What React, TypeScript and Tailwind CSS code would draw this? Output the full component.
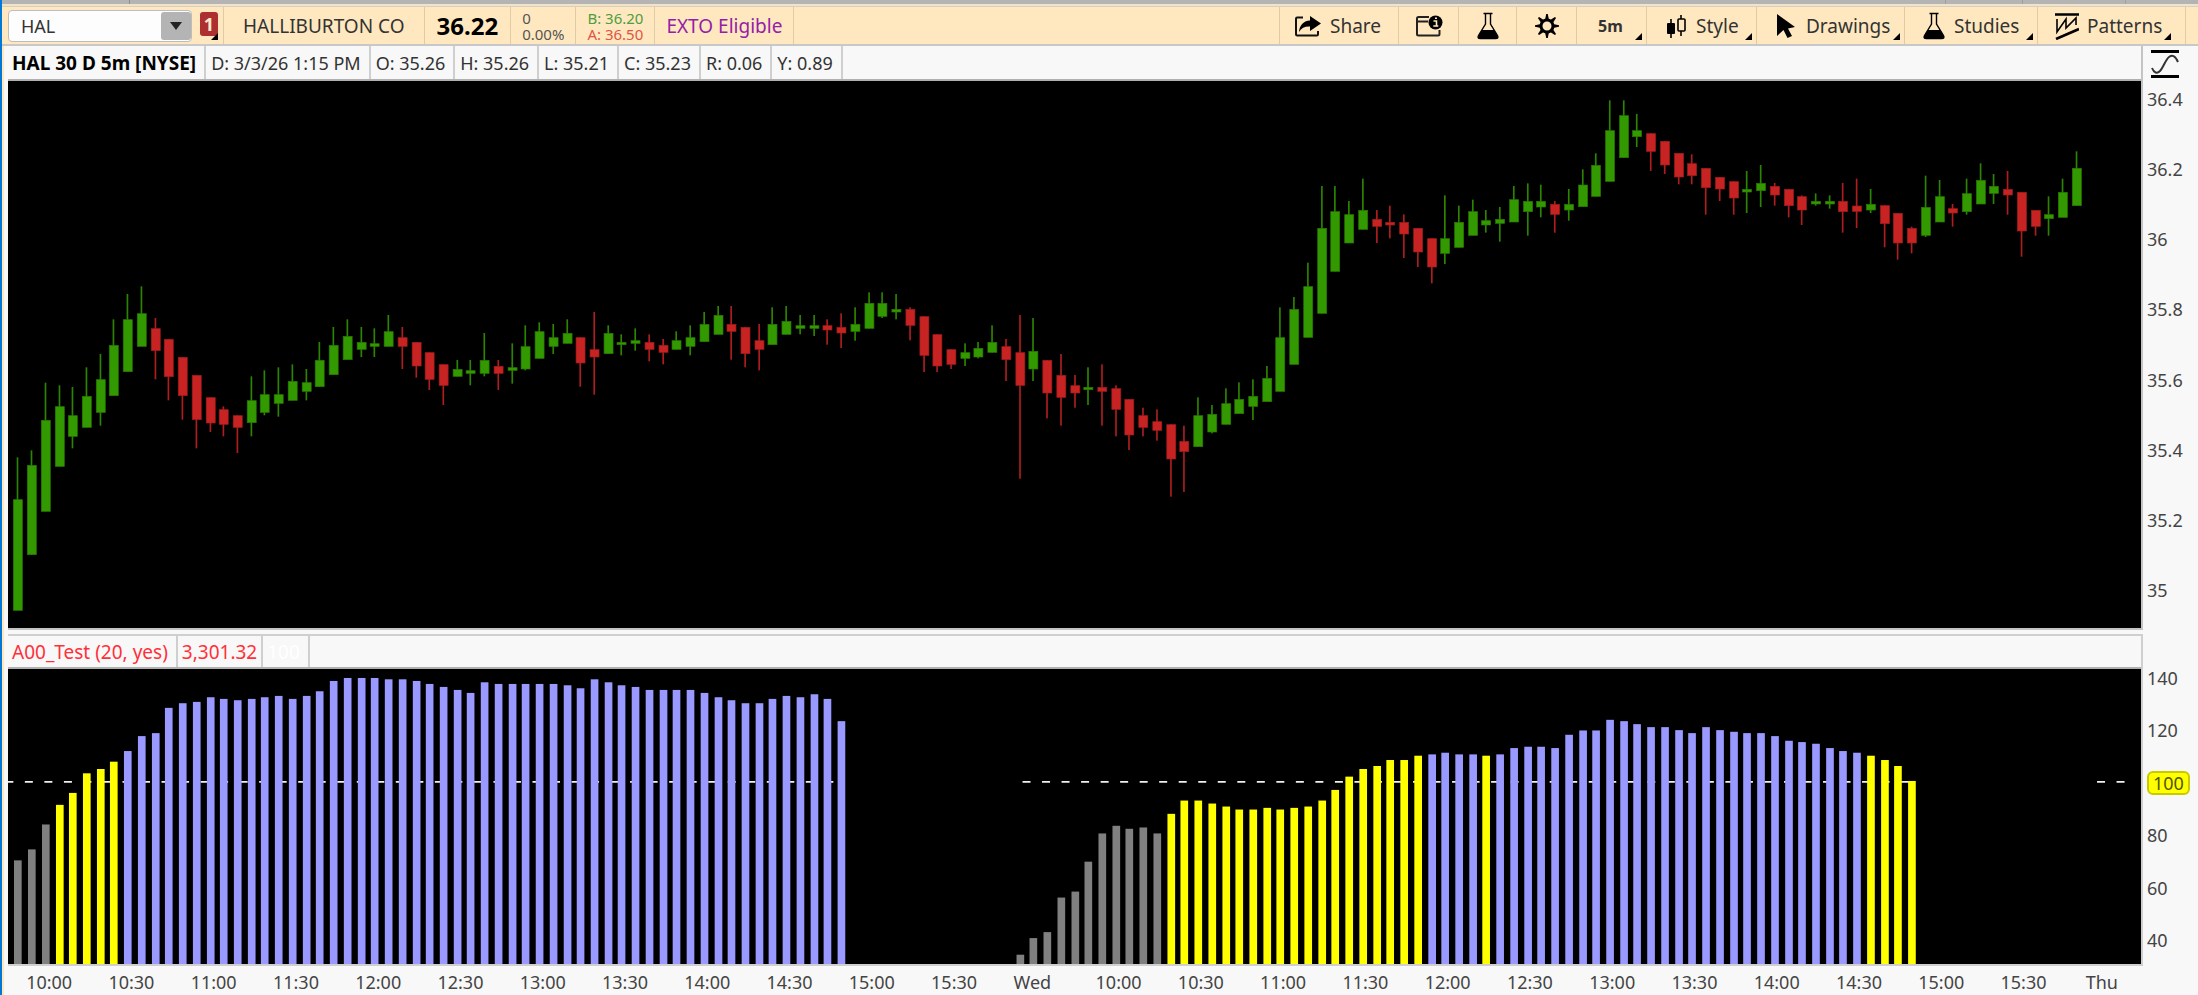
import type { ReactNode } from "react";
import clsx from "clsx";

type Candle = [dir: "g" | "r", high: number, top: number, bottom: number, low: number];

interface BarRun {
  start: number;
  color: string;
  tops: number[];
}

// plot units, three per pixel at full size
const PLOT_W = 6402;
const PRICE_H = 1641;
const STUDY_H = 888;
const PITCH = 41.19;
const FIRST = 31;

const CANDLES: Candle[] = [
  ["g", 1129, 1255, 1588, 1588], ["g", 1108, 1152, 1421, 1421], ["g", 905, 1017, 1291, 1291], ["g", 913, 976, 1156, 1156],
  ["g", 918, 1003, 1066, 1102], ["g", 859, 945, 1039, 1039], ["g", 819, 895, 994, 1034], ["g", 715, 792, 944, 944],
  ["g", 639, 715, 872, 872], ["g", 616, 697, 796, 796], ["r", 711, 742, 809, 895], ["r", 774, 774, 887, 958],
  ["r", 828, 828, 944, 1016], ["r", 882, 882, 1016, 1102], ["r", 949, 949, 1026, 1053], ["r", 976, 985, 1030, 1066],
  ["r", 1003, 1003, 1039, 1116], ["g", 886, 958, 1025, 1066], ["g", 868, 940, 994, 1003], ["g", 859, 940, 967, 1007],
  ["g", 850, 900, 958, 958], ["g", 864, 904, 931, 958], ["g", 783, 837, 917, 917], ["g", 738, 792, 881, 881],
  ["g", 715, 765, 836, 836], ["g", 738, 783, 805, 828], ["g", 742, 787, 796, 828], ["g", 702, 751, 796, 796],
  ["r", 738, 769, 796, 864], ["r", 783, 783, 855, 890], ["r", 814, 814, 895, 927], ["r", 850, 850, 913, 972],
  ["g", 837, 864, 886, 886], ["g", 837, 868, 877, 913], ["g", 756, 837, 877, 886], ["r", 837, 855, 877, 927],
  ["g", 787, 859, 868, 908], ["g", 733, 796, 864, 868], ["g", 724, 751, 832, 832], ["g", 729, 769, 796, 819],
  ["g", 715, 756, 787, 787], ["r", 769, 769, 846, 917], ["r", 693, 805, 828, 941], ["g", 733, 756, 818, 818],
  ["g", 760, 783, 791, 823], ["g", 742, 778, 787, 809], ["r", 760, 783, 805, 841], ["r", 774, 792, 814, 850],
  ["g", 751, 778, 805, 805], ["g", 733, 769, 796, 823], ["g", 693, 729, 782, 782], ["g", 675, 702, 760, 760],
  ["r", 675, 729, 751, 836], ["r", 738, 738, 818, 859], ["r", 729, 778, 805, 868], ["g", 679, 729, 791, 791],
  ["g", 675, 720, 760, 760], ["g", 702, 733, 742, 760], ["g", 702, 733, 742, 765], ["r", 715, 733, 747, 791],
  ["r", 697, 738, 756, 801], ["g", 679, 729, 751, 779], ["g", 634, 666, 742, 742], ["g", 634, 666, 706, 711],
  ["g", 639, 684, 693, 715], ["r", 679, 684, 733, 778], ["r", 706, 706, 823, 873], ["r", 760, 760, 855, 873],
  ["r", 805, 805, 850, 864], ["g", 787, 814, 832, 855], ["g", 783, 801, 828, 832], ["g", 733, 783, 814, 814],
  ["r", 774, 796, 836, 900], ["r", 702, 814, 913, 1193], ["g", 711, 810, 864, 900], ["r", 837, 837, 936, 1012],
  ["r", 819, 882, 949, 1034], ["r", 882, 913, 936, 980], ["g", 859, 918, 926, 972], ["r", 850, 918, 931, 1034],
  ["r", 913, 922, 985, 1066], ["r", 954, 954, 1062, 1107], ["r", 980, 1003, 1039, 1066], ["r", 985, 1021, 1048, 1079],
  ["r", 1030, 1030, 1134, 1247], ["r", 1034, 1080, 1112, 1233], ["g", 949, 1003, 1097, 1097], ["g", 972, 999, 1053, 1057],
  ["g", 922, 967, 1030, 1030], ["g", 904, 954, 998, 998], ["g", 895, 945, 976, 1017], ["g", 855, 891, 962, 962],
  ["g", 679, 769, 931, 931], ["g", 648, 684, 850, 850], ["g", 545, 616, 769, 769], ["g", 315, 441, 697, 697],
  ["g", 315, 391, 571, 571], ["g", 360, 400, 486, 486], ["g", 293, 387, 445, 445], ["r", 387, 414, 436, 486],
  ["r", 374, 423, 432, 472], ["r", 400, 423, 459, 531], ["r", 441, 441, 513, 558], ["r", 472, 472, 558, 607],
  ["g", 343, 472, 517, 549], ["g", 374, 423, 499, 499], ["g", 356, 391, 463, 463], ["g", 387, 418, 432, 455],
  ["g", 378, 414, 427, 482], ["g", 315, 355, 423, 423], ["g", 307, 360, 392, 464], ["g", 311, 360, 378, 409],
  ["r", 360, 369, 400, 455], ["g", 324, 369, 387, 419], ["g", 265, 311, 377, 377], ["g", 217, 252, 346, 346],
  ["g", 58, 148, 301, 301], ["g", 58, 103, 230, 230], ["g", 99, 148, 167, 198], ["r", 157, 157, 211, 270],
  ["r", 180, 180, 252, 279], ["r", 216, 216, 288, 310], ["r", 220, 247, 284, 310], ["r", 261, 261, 320, 401],
  ["r", 288, 288, 324, 360], ["r", 301, 301, 351, 401], ["g", 270, 324, 333, 396], ["g", 252, 306, 329, 378],
  ["r", 306, 315, 342, 374], ["r", 324, 324, 374, 409], ["r", 343, 346, 387, 432], ["g", 337, 360, 369, 374],
  ["g", 343, 360, 369, 383], ["r", 306, 360, 392, 455], ["r", 293, 374, 391, 441], ["g", 324, 369, 387, 396],
  ["r", 373, 373, 428, 499], ["r", 396, 396, 486, 536], ["r", 437, 441, 486, 517], ["g", 284, 378, 463, 468],
  ["g", 297, 346, 423, 423], ["r", 369, 382, 396, 437], ["g", 293, 337, 392, 401], ["g", 247, 297, 369, 369],
  ["g", 279, 315, 337, 369], ["r", 270, 324, 342, 401], ["r", 333, 333, 450, 527], ["r", 387, 387, 436, 464],
  ["g", 346, 400, 413, 464], ["g", 293, 333, 409, 409], ["g", 211, 261, 374, 374],
];

const GRAY = "#808080";
const YELLOW = "#ffff00";
const BLUE = "#9999ff";

const RUNS: BarRun[] = [
  { start: 0, color: GRAY, tops: [576, 543, 468] },
  { start: 3, color: YELLOW, tops: [409, 373, 314, 301, 279] },
  {
    start: 8,
    color: BLUE,
    tops: [
      247, 202, 193, 117, 103, 99, 85, 90, 94, 90, 85, 81, 90, 81, 67, 36, 27, 27, 27, 31, 31, 36, 45, 54, 63, 72, 40,
      45, 45, 45, 45, 45, 49, 58, 31, 40, 49, 54, 63, 63, 63, 63, 72, 85, 94, 103, 103, 90, 81, 85, 76, 90, 157,
    ],
  },
  { start: 73, color: GRAY, tops: [860, 810, 792, 688, 670, 580, 495, 472, 481, 477, 495] },
  {
    start: 84,
    color: YELLOW,
    tops: [436, 396, 396, 405, 414, 423, 423, 418, 423, 418, 414, 396, 364, 324, 301, 292, 274, 274, 261],
  },
  { start: 103, color: BLUE, tops: [257, 252, 257, 257] },
  { start: 107, color: YELLOW, tops: [261] },
  {
    start: 108,
    color: BLUE,
    tops: [
      257, 238, 234, 234, 238, 198, 185, 185, 153, 157, 166, 175, 175, 184, 193, 175, 184, 189, 193, 193, 202, 216, 220,
      225, 238, 247, 252,
    ],
  },
  { start: 135, color: YELLOW, tops: [261, 274, 292, 337] },
];

const HOURS = ["10:00", "10:30", "11:00", "11:30", "12:00", "12:30", "13:00", "13:30", "14:00", "14:30", "15:00", "15:30"];
const TIMES = [...HOURS, "Wed", ...HOURS, "Thu"];
const PRICES = ["36.4", "36.2", "36", "35.8", "35.6", "35.4", "35.2", "35"];
const LEVELS = ["140", "120", "100", "80", "60", "40"];
const QUOTE = ["D: 3/3/26 1:15 PM", "O: 35.26", "H: 35.26", "L: 35.21", "C: 35.23", "R: 0.06", "Y: 0.89"];

const snap = (v: number) => Math.round(v / 3) * 3;
const centerX = (i: number) => FIRST + i * PITCH;

function PricePlot() {
  return (
    <svg className="block h-full w-full" viewBox={`0 0 ${PLOT_W} ${PRICE_H}`} preserveAspectRatio="none" role="img" aria-label="HAL price">
      {CANDLES.map(([dir, high, top, bottom, low], i) => {
        const left = snap(centerX(i) - 15);
        const up = dir === "g";
        return (
          <g key={i}>
            <rect x={left + 11} y={high} width={5} height={low - high} fill={up ? "#2c8400" : "#ad1e1e"} />
            <rect
              x={left + 1}
              y={top + 1}
              width={27}
              height={Math.max(bottom - top - 1, 6)}
              fill={up ? "#339900" : "#c82323"}
              stroke={up ? "#287800" : "#9e1b1b"}
              strokeWidth={2}
            />
          </g>
        );
      })}
    </svg>
  );
}

function StudyPlot() {
  return (
    <svg className="block h-full w-full" viewBox={`0 0 ${PLOT_W} ${STUDY_H}`} preserveAspectRatio="none" role="img" aria-label="A00_Test">
      <g stroke="#f0f0f0" strokeWidth={5} strokeDasharray="24 34.6">
        <line x1={0} x2={2480} y1={340} y2={340} strokeDashoffset={8} />
        <line x1={3045} x2={5720} y1={340} y2={340} />
        <line x1={6270} x2={6360} y1={340} y2={340} />
      </g>
      {RUNS.flatMap((run) =>
        run.tops.map((top, n) => (
          <rect
            key={run.start + n}
            x={snap(centerX(run.start + n) - 12)}
            y={top}
            width={23}
            height={STUDY_H - top}
            fill={run.color}
          />
        ))
      )}
    </svg>
  );
}

function Corner() {
  return (
    <svg className="absolute bottom-1 right-1 h-[7px] w-[7px]" viewBox="0 0 7 7" aria-hidden="true">
      <path d="M7 0v7H0z" />
    </svg>
  );
}

interface ToolProps {
  label: string;
  className: string;
  text?: boolean;
  menu?: boolean;
  children?: ReactNode;
}

function Tool({ label, className, text = true, menu, children }: ToolProps) {
  return (
    <button
      type="button"
      aria-label={label}
      className={clsx("relative flex shrink-0 items-center border-l border-[#dfcba5]", className)}
    >
      {children}
      {text && <span>{label}</span>}
      {menu && <Corner />}
    </button>
  );
}

const ShareIcon = () => (
  <svg className="h-6 w-7" viewBox="0 0 28 24" aria-hidden="true">
    <path d="M9 3.500H3.200Q2 3.500 2 4.700V20.300Q2 21.500 3.200 21.500H22.800Q24 21.500 24 20.300V17" fill="none" stroke="#111" strokeWidth="2" />
    <path d="M16 2l11 7.500-11 7.500v-4.500c-5-.3-8.500 1.500-11 5.500.5-6.500 4-11 11-11.500z" />
  </svg>
);

const NoteIcon = () => (
  <svg className="h-6 w-7" viewBox="0 0 28 24" aria-hidden="true">
    <path d="M14 3H3.500Q2 3 2 4.500V20q0 1.500 1.500 1.500H23q1.500 0 1.500-1.500v-4M2 7.500h11" fill="none" stroke="#222" strokeWidth="2" />
    <circle cx="20.500" cy="8.500" r="7" />
    <path d="M18.500 7h3v5M18.300 12h5M20 4.300h2" stroke="#ffe8bf" strokeWidth="1.600" fill="none" />
  </svg>
);

const FlaskIcon = () => (
  <svg className="h-7 w-6" viewBox="0 0 24 28" aria-hidden="true">
    <path d="M7.500 1.500h9M9.500 2v10L2.500 23.500q-1.500 3 2 3h15q3.500 0 2-3L14.500 12V2" fill="none" stroke="#000" strokeWidth="1.400" />
    <path d="M6 18h12l4 6.500q0 2.500-2.500 2.500h-15Q2 27 2 24.500z" />
  </svg>
);

const GearIcon = () => (
  <svg className="h-6 w-6" viewBox="0 0 24 24" aria-hidden="true">
    <circle cx="12" cy="12" r="6" fill="none" stroke="#000" strokeWidth="3" />
    {[0, 45, 90, 135, 180, 225, 270, 315].map((a) => (
      <path key={a} d="M10 6l1.200-6h1.600l1.200 6z" transform={`rotate(${a} 12 12)`} />
    ))}
  </svg>
);

const CandlesIcon = () => (
  <svg className="h-6 w-5" viewBox="0 0 20 24" aria-hidden="true">
    <path d="M5 5v19" stroke="#000" strokeWidth="1.600" />
    <rect x="1" y="9" width="8" height="11" rx="1" />
    <path d="M15 1v21" stroke="#000" strokeWidth="1.600" />
    <rect x="12" y="5" width="7" height="12" rx="1" fill="#ffe8bf" stroke="#000" strokeWidth="1.600" />
  </svg>
);

const CursorIcon = () => (
  <svg className="h-6 w-5" viewBox="0 0 20 24" aria-hidden="true">
    <path d="M1 0l18 13-7 1.500 4 7.500-4.500 2-4-8L1 22z" />
  </svg>
);

const PatternsIcon = () => (
  <svg className="h-7 w-6" viewBox="0 0 24 28" fill="none" stroke="#000" aria-hidden="true">
    <path d="M0 2.500h24M1 27L24 17" strokeWidth="2.600" />
    <path d="M2 7v13L11 7v9L21 6v7" strokeWidth="1.600" />
  </svg>
);

const ScaleIcon = () => (
  <svg className="h-7 w-7" viewBox="0 0 28 28" fill="none" stroke="#000" aria-hidden="true">
    <path d="M0 1.500h28M0 26.500h28" strokeWidth="3" />
    <path d="M1 18c2 5 5 6 8 3s6-12 9-14 6-2 9 5" stroke="#333" strokeWidth="2" />
  </svg>
);

function Toolbar() {
  return (
    <div className="flex h-10 shrink-0 items-stretch border-b-2 border-t border-b-[#c8c8c8] border-t-[#d9cfbd] bg-[#ffe8bf] text-[19px]">
      <div className="flex items-center gap-2 pl-[6px] pr-[5px]">
        <div className="flex h-8 w-[184px] items-center rounded border border-[#bdbdbd] bg-[#fdfdfd]">
          <input aria-label="Symbol" defaultValue="HAL" className="h-[30px] min-w-0 flex-1 bg-transparent pl-3 text-lg leading-7 text-[#333] outline-none" />
          <button type="button" aria-label="Open symbol list" className="flex h-7 w-[30px] items-center justify-center rounded-[3px] bg-[#b4b4b4]">
            <svg className="h-2 w-3" viewBox="0 0 12 8" aria-hidden="true"><path d="M0 0h12L6 8z" fill="#222" /></svg>
          </button>
        </div>
        <button type="button" aria-label="Link color 1" className="relative flex h-full w-[18px] items-center">
          <span className="mb-1 h-6 w-[18px] rounded-[3px] bg-[#ad2f2f] text-center text-lg font-bold leading-6 text-[#ffe8d0]">1</span>
          <svg className="absolute bottom-1 right-0 h-[7px] w-[7px]" viewBox="0 0 7 7" aria-hidden="true"><path d="M7 0v7H0z" /></svg>
        </button>
      </div>
      <div className="flex items-center border-l border-[#dfcba5] px-[19px] text-[#333]">HALLIBURTON CO</div>
      <div className="flex items-center border-l border-[#dfcba5] px-3 text-2xl font-bold text-black">36.22</div>
      <div className="flex flex-col justify-center border-l border-[#dfcba5] px-[11px] text-[15px] leading-4 text-[#555]">
        <span>0</span>
        <span>0.00%</span>
      </div>
      <div className="flex flex-col justify-center border-l border-[#dfcba5] px-[11px] text-[15px] leading-4">
        <span className="text-[#4e9d42]">B: 36.20</span>
        <span className="text-[#df5545]">A: 36.50</span>
      </div>
      <div className="flex items-center border-x border-[#dfcba5] px-[11px] text-[#9420a8]">EXTO Eligible</div>
      <div className="flex-1" />
      <div className="flex items-stretch border-r border-[#dfcba5] pr-[10px] text-[#333]">
        <Tool label="Share" className="w-[119px] gap-2 pl-[14px]"><ShareIcon /></Tool>
        <Tool label="Notes" text={false} className="w-[60px] justify-center"><NoteIcon /></Tool>
        <Tool label="Lab" text={false} className="w-[58px] justify-center"><FlaskIcon /></Tool>
        <Tool label="Settings" text={false} className="w-[60px] justify-center"><GearIcon /></Tool>
        <Tool label="5m" menu className="w-[70px] pl-[21px] text-base font-bold" />
        <Tool label="Style" menu className="w-[110px] gap-[10px] pl-[19px]"><CandlesIcon /></Tool>
        <Tool label="Drawings" menu className="w-[148px] gap-[10px] pl-[19px]"><CursorIcon /></Tool>
        <Tool label="Studies" menu className="w-[133px] gap-2 pl-[17px]"><FlaskIcon /></Tool>
        <Tool label="Patterns" menu className="w-[138px] gap-2 pl-[17px]"><PatternsIcon /></Tool>
      </div>
      <div className="w-3" />
    </div>
  );
}

export default function App() {
  return (
    <div className="flex h-screen flex-col overflow-hidden border-l-2 border-[#0078d7] bg-[#f8f8f8] font-['Noto_Sans','Open_Sans',sans-serif] text-lg leading-6 text-[#444]">
      <div className="flex h-[6px] shrink-0 border-b-2 border-[#f0e3ca] bg-[#b4b4b4]">
        <div className="w-32 border-r border-[#8f8f8f]" />
        <div className="flex-1" />
        <div className="w-[78px] border-x border-[#a0a0a0]" />
        <div className="w-[103px] border-r border-[#a0a0a0]" />
        <div className="w-[72px]" />
      </div>
      <Toolbar />

      <main className="flex min-h-0 flex-1 flex-col border-l-2 border-[#ffe8bf] pl-1">
        <section className="flex min-h-0 flex-[584_1_0%]">
          <div className="flex min-w-0 flex-1 flex-col border-b-2 border-r-2 border-[#c4c4c4]">
            <div className="flex h-[35px] shrink-0 items-stretch border-b-2 border-[#b0b0b0]">
              <h1 className="flex items-center border-r-2 border-[#cfcfcf] pl-1 pr-2 text-[19px] font-bold text-black">HAL 30 D 5m [NYSE]</h1>
              {QUOTE.map((cell) => (
                <span key={cell} className="flex items-center border-r-2 border-[#cfcfcf] pl-[5px] pr-2 text-[#333]">{cell}</span>
              ))}
            </div>
            <div className="min-h-0 flex-1 bg-black"><PricePlot /></div>
          </div>
          <div className="flex w-[55px] shrink-0 flex-col">
            <button type="button" aria-label="Fit price scale" className="flex h-[35px] shrink-0 items-center pl-2"><ScaleIcon /></button>
            <ul className="flex flex-1 flex-col justify-between pb-[30px] pl-1 pt-2 leading-5">
              {PRICES.map((p) => <li key={p}>{p}</li>)}
            </ul>
          </div>
        </section>

        <section className="mt-1 flex min-h-0 flex-[332_1_0%]">
          <div className="flex min-w-0 flex-1 flex-col border-b-2 border-r-2 border-t-2 border-[#cfcfcf]">
            <div className="flex h-[33px] shrink-0 items-stretch border-b-2 border-[#b0b0b0] text-[19px] text-[#ff3038]">
              <h2 className="flex items-center border-r-2 border-[#cfcfcf] pl-1 pr-2">A00_Test (20, yes)</h2>
              <span className="flex items-center border-r-2 border-[#cfcfcf] px-1">3,301.32</span>
              <span className="flex items-center border-r-2 border-[#cfcfcf] pl-1 pr-2 text-white">100</span>
            </div>
            <div className="min-h-0 flex-1 bg-black"><StudyPlot /></div>
          </div>
          <ul className="flex w-[55px] shrink-0 flex-col justify-between pb-4 pl-1 pt-[34px] leading-5">
            {LEVELS.map((level) => (
              <li key={level} className="flex h-5 items-center">
                {level === "100" ? (
                  <span className="rounded-md border-2 border-[#c9c900] bg-[#ffff00] px-1 text-[#555500]">{level}</span>
                ) : (
                  level
                )}
              </li>
            ))}
          </ul>
        </section>

        <ol className="flex shrink-0 pb-px pr-[51px] pt-1">
          {TIMES.map((t, i) => (
            <li key={i} className="min-w-0 flex-1 text-center">
              <span className={clsx(!t.endsWith("0") && "pr-2")}>{t}</span>
            </li>
          ))}
        </ol>
      </main>
    </div>
  );
}
